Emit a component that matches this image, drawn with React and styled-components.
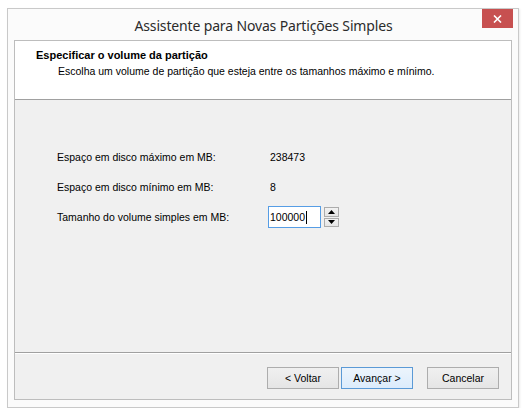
import React from "react";
import styled, { createGlobalStyle } from "styled-components";

const Global = createGlobalStyle`
  html, body { margin: 0; padding: 0; background: #ffffff; }
  body { font-family: "Liberation Sans", Arial, sans-serif; font-size: 10.5px; color: #000; }
  * { box-sizing: border-box; }
`;

const Page = styled.div`
  padding: 8px 0 0 7px;
`;

const Window = styled.div`
  width: 512px;
  height: 400px;
  background: #fbfbfb;
  border: 1px solid #c9c9c9;
  box-shadow: 1px 1px 2px rgba(0, 0, 0, 0.08);
  display: flex;
  flex-direction: column;
  padding: 0 6px 7px 6px;
`;

const TitleBar = styled.div`
  height: 31px;
  display: grid;
  grid-template-columns: 1fr auto 1fr;
  align-items: center;
  margin: 0 -6px 0 -6px;
  padding: 0 5px 0 6px;
`;

const Title = styled.div`
  grid-column: 2;
  font-family: "Noto Sans", "Open Sans", sans-serif;
  font-size: 14px;
  color: #2b2b2b;
  padding-top: 2px;
  letter-spacing: -0.15px;
`;

const CloseButton = styled.div`
  grid-column: 3;
  justify-self: end;
  align-self: start;
  width: 31px;
  height: 19px;
  background: #c75050;
  display: flex;
  align-items: center;
  justify-content: center;
`;

const Panel = styled.div`
  flex: 1;
  border: 1px solid #bdbdbd;
  display: flex;
  flex-direction: column;
  background: #f0f0f0;
`;

const Header = styled.div`
  height: 59px;
  background: #ffffff;
  border-bottom: 1px solid #a0a0a0;
  padding: 8px 0 0 21px;
`;

const HeaderTitle = styled.div`
  font-weight: bold;
  font-size: 11px;
  line-height: 13px;
`;

const HeaderSub = styled.div`
  font-size: 10.5px;
  line-height: 13px;
  padding-left: 22px;
  margin-top: 3px;
`;

const Body = styled.div`
  flex: 1;
  padding: 46px 0 0 42px;
  display: flex;
  flex-direction: column;
  gap: 8px;
  border-bottom: 1px solid #a0a0a0;
  box-shadow: 0 1px 0 #ffffff;
`;

const Row = styled.div`
  height: 22px;
  display: grid;
  grid-template-columns: 211px auto;
  align-items: center;
`;

const Value = styled.div`
  padding-left: 2px;
`;

const Field = styled.div`
  display: flex;
  align-items: center;
  gap: 3px;
`;

const Input = styled.div`
  width: 53px;
  height: 22px;
  background: #ffffff;
  border: 1px solid #569de5;
  padding-left: 1px;
  display: flex;
  align-items: center;
`;

const Caret = styled.span`
  display: inline-block;
  width: 1px;
  height: 13px;
  background: #000;
  margin-left: 1px;
`;

const Spinner = styled.div`
  display: flex;
  flex-direction: column;
  gap: 1px;
  width: 15px;
  height: 20px;
`;

const SpinButton = styled.div`
  flex: 1;
  border: 1px solid #acacac;
  background: linear-gradient(#f2f2f2, #e5e5e5);
  display: flex;
  align-items: center;
  justify-content: center;
`;

const Footer = styled.div`
  height: 45px;
  margin-top: 1px;
  display: flex;
  align-items: flex-start;
  justify-content: flex-end;
  padding: 13px 12px 0 0;
`;

const Button = styled.div`
  width: 72px;
  height: 22px;
  border: 1px solid ${(p) => (p.$default ? "#5b9ad6" : "#adadad")};
  background: ${(p) => (p.$default ? "linear-gradient(#ecf4fc, #dcecfc)" : "linear-gradient(#f0f0f0, #e5e5e5)")};
  display: flex;
  align-items: center;
  justify-content: center;
  font-size: 10.5px;
  margin-left: ${(p) => p.$gap}px;
`;

const Arrow = ({ up }) => (
  <svg width="7" height="4" viewBox="0 0 7 4">
    <path d={up ? "M0 4 L3.5 0 L7 4 Z" : "M0 0 L3.5 4 L7 0 Z"} fill="#000" />
  </svg>
);

export default function App() {
  return (
    <>
      <Global />
      <Page>
        <Window>
          <TitleBar>
            <Title>Assistente para Novas Partições Simples</Title>
            <CloseButton>
              <svg width="9" height="8" viewBox="0 0 9 8">
                <path d="M1 0.5 L8 7.5 M8 0.5 L1 7.5" stroke="#fff" strokeWidth="1.6" />
              </svg>
            </CloseButton>
          </TitleBar>
          <Panel>
            <Header>
              <HeaderTitle>Especificar o volume da partição</HeaderTitle>
              <HeaderSub>Escolha um volume de partição que esteja entre os tamanhos máximo e mínimo.</HeaderSub>
            </Header>
            <Body>
              <Row>
                <span>Espaço em disco máximo em MB:</span>
                <Value>238473</Value>
              </Row>
              <Row>
                <span>Espaço em disco mínimo em MB:</span>
                <Value>8</Value>
              </Row>
              <Row>
                <span>Tamanho do volume simples em MB:</span>
                <Field>
                  <Input>
                    100000<Caret />
                  </Input>
                  <Spinner>
                    <SpinButton><Arrow up /></SpinButton>
                    <SpinButton><Arrow /></SpinButton>
                  </Spinner>
                </Field>
              </Row>
            </Body>
            <Footer>
              <Button $gap={0}>&lt; Voltar</Button>
              <Button $default $gap={2}>Avançar &gt;</Button>
              <Button $gap={14}>Cancelar</Button>
            </Footer>
          </Panel>
        </Window>
      </Page>
    </>
  );
}
